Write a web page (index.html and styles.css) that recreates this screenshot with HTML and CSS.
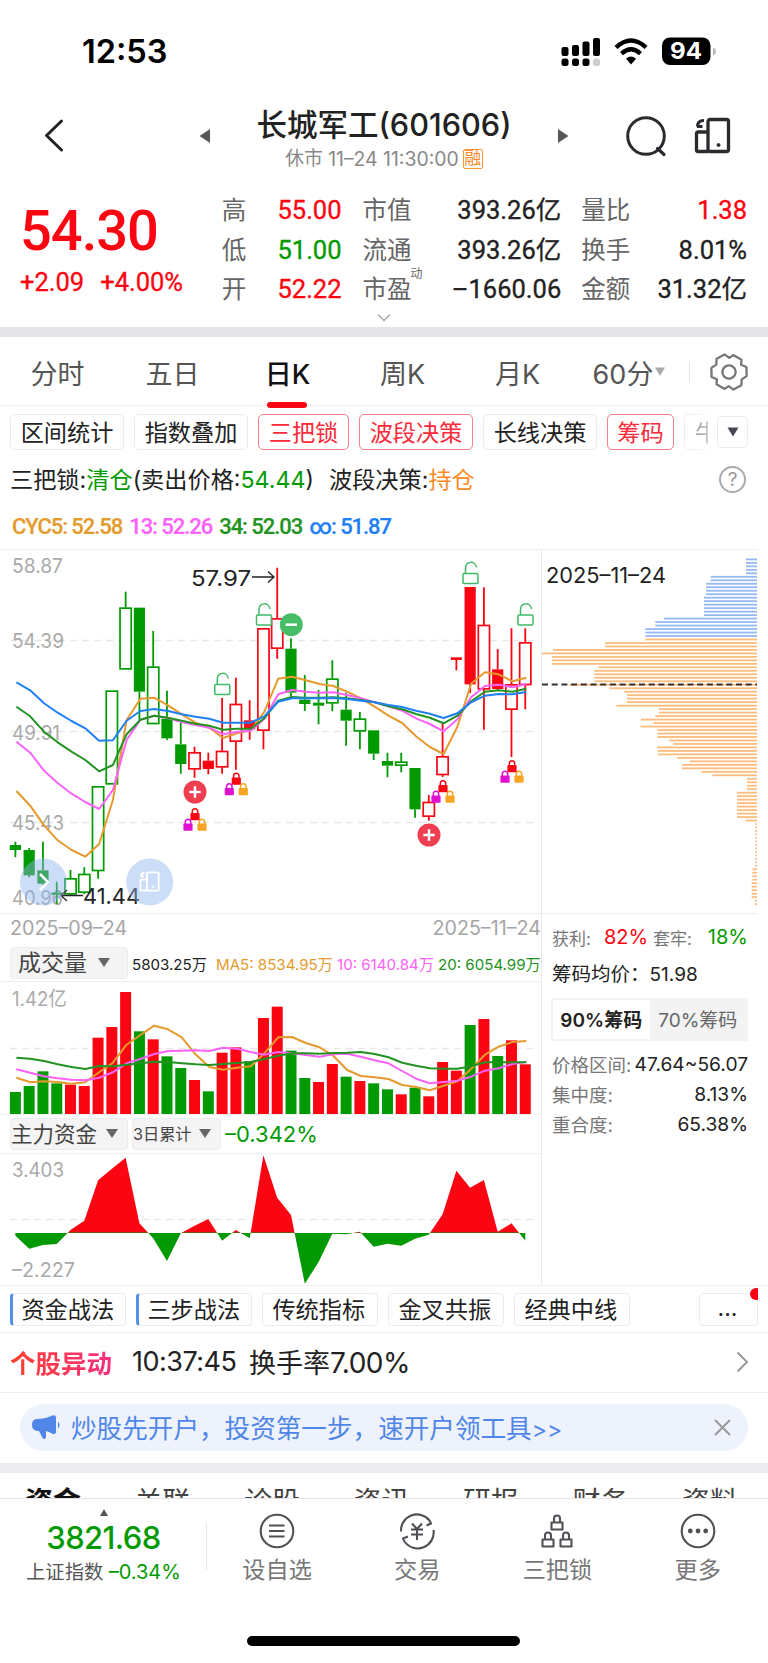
FILE: index.html
```html
<!DOCTYPE html>
<html lang="zh-CN">
<head>
<meta charset="utf-8">
<title>长城军工(601606)</title>
<link rel="stylesheet" href="styles.css">
</head>
<body>
<div class="app">
  <div class="status">
    <div class="clock">12:53</div>
    <svg class="status-icons" width="160" height="32" viewBox="0 0 160 32">
      <g fill="#000">
        <rect x="1.500" y="11" width="7" height="9" rx="2"/><rect x="12" y="9" width="7" height="11" rx="2"/><rect x="22.500" y="5.500" width="7" height="14.500" rx="2"/><rect x="33" y="2" width="7" height="18" rx="2"/>
        <rect x="1.500" y="22.500" width="7" height="7.500" rx="2.500"/><rect x="12" y="22.500" width="7" height="7.500" rx="2.500"/><rect x="22.500" y="22.500" width="7" height="7.500" rx="2.500"/><rect x="33" y="22.500" width="7" height="7.500" rx="2.500" fill="#ccc"/>
      </g>
      <g fill="none" stroke="#000" stroke-width="4.300"><path d="M56 11.500Q71 -2.500 86 11.500"/><path d="M61.500 17.700Q71 9 80.500 17.700"/></g>
      <path d="M66 22.700Q71 18.500 76 22.700L71 28.500Z"/>
      <rect x="102" y="1.500" width="48.500" height="27.500" rx="8"/>
      <path d="M153 11.500Q156 12.500 156 15.500T153 19.500Z" fill="#bbb"/>
      <text x="110" y="23" textLength="32" lengthAdjust="spacingAndGlyphs" class="batt">94</text>
    </svg>
  </div>
  <header class="head">
    <svg class="back" width="24" height="36" viewBox="0 0 24 36"><path d="M19.500 3L4.500 17.500L19.500 32" fill="none" stroke="#222" stroke-width="3" stroke-linecap="round" stroke-linejoin="round"/></svg>
    <svg class="prev" width="12" height="14" viewBox="0 0 12 14"><path d="M11 0V14L.5 7Z" fill="#555"/></svg>
    <div class="titles">
      <h1>长城军工<span class="code">(601606)</span></h1>
      <p>休市 <span class="time">11–24 11:30:00</span><i class="rong">融</i></p>
    </div>
    <svg class="next" width="12" height="14" viewBox="0 0 12 14"><path d="M1 0V14L11.500 7Z" fill="#555"/></svg>
    <svg class="search" width="42" height="44" viewBox="0 0 42 44"><circle cx="21" cy="21" r="18.300" fill="none" stroke="#2b2b2f" stroke-width="3"/><path d="M32.500 33.500L39 39.500" stroke="#2b2b2f" stroke-width="3.200" stroke-linecap="round"/></svg>
    <svg class="rotate" width="38" height="38" viewBox="0 0 38 38"><use href="#rot"/></svg>
  </header>
  <section class="quote">
    <div class="last"><div class="price">54.30</div><div class="chg"><span>+2.09</span><span>+4.00%</span></div></div>
    <dl class="stats c1"><dt>高</dt><dd class="up">55.00</dd><dt>低</dt><dd class="dn">51.00</dd><dt>开</dt><dd class="up">52.22</dd></dl>
    <dl class="stats c2"><dt>市值</dt><dd>393.26亿</dd><dt>流通</dt><dd>393.26亿</dd><dt>市盈<sup>动</sup></dt><dd>–1660.06</dd></dl>
    <dl class="stats c3"><dt>量比</dt><dd class="up">1.38</dd><dt>换手</dt><dd>8.01%</dd><dt>金额</dt><dd>31.32亿</dd></dl>
  </section>
  <div class="more"><svg width="14" height="9" viewBox="0 0 14 9"><path d="M1 1.500L7 7.500L13 1.500" fill="none" stroke="#aaa" stroke-width="1.400"/></svg></div>
  <div class="band"></div>
  <nav class="periods">
    <span>分时</span><span>五日</span><span class="on">日K</span><span>周K</span><span>月K</span>
    <span class="min">60分<svg width="12" height="10" viewBox="0 0 12 10"><path d="M1 .5H11L6 9Z" fill="#aaa"/></svg></span>
    <i class="rule"></i>
    <svg class="gear" width="38" height="38" viewBox="-19 -19 38 38"><g transform="rotate(30) scale(1.05)" fill="none" stroke="#777" stroke-width="2.200" stroke-linejoin="round"><path d="M-4.500 -16H4.500L6.500 -11.800L12 -12.400L16.500 -5L14 0L16.500 5L12 12.400L6.500 11.800L4.500 16H-4.500L-6.500 11.800L-12 12.400L-16.500 5L-14 0L-16.500 -5L-12 -12.400L-6.500 -11.800Z"/><circle r="6.300"/></g></svg>
  </nav>
  <div class="tools">
    <span class="w4">区间统计</span><span class="w4">指数叠加</span><span class="w3 sel">三把锁</span><span class="w4 sel">波段决策</span><span class="w4">长线决策</span><span class="w2 sel">筹码</span><span class="cut">牛</span><span class="drop"><svg width="12" height="10" viewBox="0 0 12 10"><path d="M.5 .5H11.500L6 9.500Z" fill="#445"/></svg></span>
  </div>
  <div class="signal"><span class="s1">三把锁:<b class="dn">清仓</b>(卖出价格:<b class="dn num">54.44</b>)</span><span>波段决策:<b class="or">持仓</b></span><i class="help">?</i></div>
  <div class="cyc"><span class="mo">CYC5: 52.58</span><span class="mp">13: 52.26</span><span class="mg">34: 52.03</span><span class="mb">∞: 51.87</span></div>

  <main class="board">
    <div class="left">
      <svg id="kline" class="kline" width="541" height="363" viewBox="0 550 541 363"></svg>
      <div class="dates"><span>2025–09–24</span><span>2025–11–24</span></div>
      <div class="volbar"><span class="select big">成交量<i class="tri"></i></span><span class="v0">5803.25万</span><span class="v1">MA5: 8534.95万</span><span class="v2">10: 6140.84万</span><span class="v3">20: 6054.99万</span></div>
      <svg id="vol" class="vol" width="541" height="132" viewBox="0 982 541 132"></svg>
      <div class="fundbar"><span class="select fund">主力资金<i class="tri"></i></span><span class="select small">3日累计<i class="tri"></i></span><span class="fv">–0.342%</span></div>
      <svg id="fund" class="fundchart" width="541" height="131" viewBox="0 1154 541 131"></svg>
    </div>
    <div class="right">
      <svg id="chips" class="chips" width="216" height="363" viewBox="542 550 216 363"></svg>
      <div class="info">
        <div class="pl"><span class="k">获利:</span><span class="up">82%</span><span class="k">套牢:</span><span class="dn">18%</span></div>
        <div class="avg">筹码均价：<span>51.98</span></div>
        <div class="seg"><span class="on">90%筹码</span><span>70%筹码</span></div>
        <div class="kv"><span>价格区间:</span><b>47.64~56.07</b></div>
        <div class="kv"><span>集中度:</span><b>8.13%</b></div>
        <div class="kv"><span>重合度:</span><b>65.38%</b></div>
      </div>
    </div>
  </main>

  <div class="tactics"><span class="blue">资金战法</span><span class="blue">三步战法</span><span>传统指标</span><span>金叉共振</span><span>经典中线</span><span class="dots">...</span></div>
  <div class="alert"><strong>个股异动</strong><span class="at">10:37:45</span><span class="am">换手率<i>7.00%</i></span><svg width="13" height="22" viewBox="0 0 13 22"><path d="M1.500 1.500L11 11L1.500 20.500" fill="none" stroke="#999" stroke-width="2"/></svg></div>
  <div class="ad-wrap"><div class="ad">
    <svg width="29" height="25" viewBox="0 0 29 25"><path d="M5 4C10 4 15 3 19.500 .8Q24 -.8 24 3V17Q24 20 20 18.500Q17 16.500 14 16V21Q14 24 12.500 24Q11 24.500 10 22L7 16Q0 16 0 10Q0 4 5 4Z" fill="#4f86e8"/><path d="M26 6.500Q29 10 26 13.500Z" fill="#4f86e8"/></svg>
    <span>炒股先开户，投资第一步，速开户领工具<i>&gt;&gt;</i></span>
    <svg class="close" width="17" height="17" viewBox="0 0 17 17"><path d="M1 1L16 16M16 1L1 16" stroke="#999" stroke-width="2"/></svg>
  </div></div>
  <div class="band light"></div>
  <nav class="subtabs"><span class="on">资金</span><span>关联</span><span>诊股</span><span>资讯</span><span>研报</span><span>财务</span><span>资料</span></nav>
  <footer class="bottom">
    <div class="index"><svg width="8" height="7" viewBox="0 0 8 7"><path d="M4 0L8 7H0Z" fill="#555"/></svg><div class="iv">3821.68</div><div class="in">上证指数 <span>–0.34%</span></div></div>
    <div class="act"><svg width="38" height="38" viewBox="-19 -19 38 38"><circle r="16.300" /><path d="M-8 -5.500H7.500M-8 0H7.500M-8 5.500H7.500"/></svg><span>设自选</span></div>
    <div class="act"><svg width="38" height="38" viewBox="-19 -19 38 38"><path d="M-16 .5A16 16 0 0 1 12.500 -10.500L14 -7.500L9.500 -5.500M16.500 -1A16 16 0 0 1 -12.500 10.500L-14 7.500L-9 5.500"/><path d="M-5 -7.500L0 -2L5 -7.500M0 -2V9M-6 -1.500H6M-6 3.500H6"/></svg><span>交易</span></div>
    <div class="act"><svg width="38" height="38" viewBox="-19 -19 38 38"><path d="M-5.500 -8.500H5.500V-1.500H-5.500ZM-3 -8.500V-12.500Q-3 -15.500 0 -15.500T3 -12.500V-8.500M-14.500 8.500H-3.500V15.500H-14.500ZM-12 8.500V4.500Q-12 1.500 -9 1.500T-6 4.500V8.500M3.500 8.500H14.500V15.500H3.500ZM6 8.500V4.500Q6 1.500 9 1.500T12 4.500V8.500"/></svg><span>三把锁</span></div>
    <div class="act"><svg width="38" height="38" viewBox="-19 -19 38 38"><circle r="16.300"/><g class="dot"><circle cx="-7.700" r="2.400"/><circle r="2.400"/><circle cx="7.700" r="2.400"/></g></svg><span>更多</span></div>
    <div class="home"></div>
  </footer>
</div>
<svg class="defs" width="0" height="0"><defs>
  <g id="rot" fill="none" stroke="currentColor" stroke-width="3.300" stroke-linejoin="round"><rect x="14" y="2.500" width="20.500" height="32" rx="2"/><path d="M14 15H4Q2.500 15 2.500 16.500V33Q2.500 34.500 4 34.500H14"/><path d="M3.500 9.500Q3.500 3.500 10 3.500M3 9.500H8.500" stroke-width="3.200"/><circle cx="24.500" cy="28" r="1.500" fill="currentColor" stroke-width="1"/></g>
</defs></svg>
<script src="charts.js"></script>
</body>
</html>
```
FILE: styles.css
```css
* { box-sizing: border-box; margin: 0; padding: 0; }
body { width: 768px; background: #fff; color: #222; font-family: Inter, "Noto Sans CJK SC", sans-serif; }
i, b { font-style: normal; font-weight: inherit; }
svg { display: block; flex: none; }
.app { width: 768px; height: 1663px; overflow: hidden; display: flex; flex-direction: column; }
.app > * { flex: none; }
.defs { position: absolute; }
.up { color: #fb0512; }
.dn { color: #029a02; }
.or { color: #ff8a1f; }

.status { height: 98px; padding: 36px 0 0 82px; display: flex; }
.clock { width: 478px; font-size: 32.500px; line-height: 32px; font-weight: 600; color: #000; }
.batt { font: 700 23px Inter, sans-serif; fill: #fff; }

.head { height: 88px; display: flex; align-items: flex-start; }
.back { margin: 20px 0 0 42px; }
.prev { margin: 31px 0 0 133px; }
.titles { width: 346px; text-align: center; }
.titles h1 { font-size: 30.500px; font-weight: 500; line-height: 40px; padding-top: 7px; white-space: nowrap; }
.code { font-size: 30.700px; }
.titles p { margin-top: 3px; font-size: 18.800px; line-height: 22px; color: #888; display: flex; justify-content: center; align-items: center; white-space: pre; }
.time { font-size: 19.400px; }
.rong { width: 20px; height: 20px; margin-left: 4px; border: 1.500px solid #f9973c; border-radius: 2px; color: #f98a26; font-size: 17px; line-height: 16px; display: flex; justify-content: center; }
.next { margin: 31px 0 0 0; }
.search { margin: 17px 0 0 56px; }
.rotate { margin: 19px 0 0 27px; color: #2b2b2f; }

.quote { height: 122px; padding: 5px 21px 0 20px; display: flex; font-family: Roboto, "Noto Sans CJK SC", sans-serif; font-weight: 500; }
.last { width: 203px; color: #fb0512; }
.price { font-size: 56px; line-height: 56px; margin: 12px 0 0 0; letter-spacing: -1px; }
.chg { display: flex; gap: 16px; font-size: 25.500px; line-height: 30px; margin-top: 8px; font-weight: 400; -webkit-text-stroke: .3px; }
.stats { display: grid; grid-template-columns: auto 1fr; grid-auto-rows: 39.500px; line-height: 39.500px; }
.stats dt { font-size: 24.500px; color: #666; font-weight: 400; white-space: nowrap; position: relative; left: -1px; }
.stats dd { font-size: 25.500px; text-align: right; font-weight: 400; -webkit-text-stroke: .35px; white-space: nowrap; }
.stats sup { position: absolute; left: 48px; top: -6px; font-size: 12px; line-height: 20px; }
.c1 { width: 119px; }
.c2 { width: 198px; margin-left: 22px; }
.c3 { width: 165px; margin-left: 21px; }
.more { height: 19px; padding-top: 5px; display: flex; justify-content: center; }
.band { height: 10px; background: #e5e5e8; }
.band.light { background: #ececef; }

.periods { height: 69px; border-bottom: 1px solid #eee; display: flex; align-items: center; padding-top: 2px; font-size: 27px; color: #555; }
.periods span { width: 115px; height: 100%; display: flex; align-items: center; justify-content: center; }
.periods span.on { color: #111; font-weight: 500; position: relative; }
.periods span.on::after { content: ""; position: absolute; left: 37px; bottom: -3px; width: 40px; height: 6px; border-radius: 3px; background: #fb0512; }
.periods .min { width: 109px; gap: 1px; }
.periods .rule { width: 1px; height: 20px; margin-left: 5px; background: #e5e5e5; }
.periods .gear { margin-left: 20px; }

.tools { height: 44px; padding: 8px 0 0 10px; display: flex; gap: 10px; font-size: 23.200px; }
.tools span { height: 36px; border: 1px solid #ececec; border-radius: 5px; display: flex; align-items: center; justify-content: center; white-space: nowrap; padding-bottom: 3px; }
.w4 { width: 114px; }
.w3 { width: 91px; }
.w2 { width: 67px; }
.tools .sel { color: #fa2b3a; border-color: #fa7f88; }
.tools .cut { width: 24px; overflow: hidden; justify-content: flex-start; padding-left: 10px; border-right: 0; border-radius: 5px 0 0 5px; color: #777; mask-image: linear-gradient(90deg, #000, #0006); }
.tools .drop { width: 31px; height: 32px; margin: 2px 0 0 -1px; padding: 0; }

.signal { height: 55px; padding: 0 22px 0 10px; display: flex; align-items: center; font-size: 23.200px; color: #222; }
.s1 { width: 319px; white-space: nowrap; }
.help { margin: 3px 0 0 auto; width: 27px; height: 27px; border: 2px solid #aaa; border-radius: 50%; color: #999; font-size: 19px; line-height: 23px; text-align: center; }
.cyc { height: 44px; padding: 0 0 2px 12px; display: flex; gap: 7px; align-items: center; font: 500 22px Roboto, sans-serif; letter-spacing: -1.05px; white-space: nowrap; -webkit-text-stroke: .2px; }
.mo { color: #e59a2e; }
.mp { color: #fb62f8; }
.mg { color: #229322; }
.mb { color: #1f80f5; }

.board { height: 736px; width: 758px; display: flex; border-top: 1px solid #eee; }
.left { width: 542px; border-right: 1px solid #e9e9ee; }
.right { width: 216px; }
.dates { height: 31px; border-top: 1px solid #eee; padding-left: 10px; display: flex; justify-content: space-between; font-size: 19.700px; line-height: 29px; color: #a5a5a5; }
.volbar { height: 38px; padding-left: 10px; display: flex; align-items: center; font-size: 15.100px; white-space: nowrap; border-bottom: 1px solid #eee; }
.select { height: 32px; border: 1px solid #ececec; border-radius: 4px; background: #f4f4f4; color: #444; display: flex; align-items: center; justify-content: space-between; padding: 0 17px 3px 0; }
.tri { width: 0; height: 0; margin-top: 2px; border: 6px solid transparent; border-top: 9px solid #666; border-bottom: 0; }
.big { width: 118px; padding-left: 7px; font-size: 23px; }
.v0 { width: 84px; margin-left: 4px; }
.v1 { width: 121px; color: #e59a2e; }
.v2 { width: 101px; color: #fb62f8; }
.v3 { color: #229322; }
.fundbar { height: 40px; padding-left: 10px; display: flex; align-items: center; border-bottom: 1px solid #eee; border-top: 1px solid #eee; }
.fund { width: 118px; font-size: 21.500px; padding-right: 9px; }
.small { width: 89px; margin-left: 4px; font-size: 16.200px; padding-right: 9px; }
.fv { margin-left: 4px; font-size: 22px; color: #029a02; }
.axis { font: 20px Inter, "Noto Sans CJK SC", sans-serif; fill: #aaa; }
.note { font: 22px Inter, sans-serif; fill: #222; }
.ln { fill: none; stroke-width: 2; stroke-linejoin: round; }

.info { border-top: 1px solid #eee; padding: 8px 10px 0 10px; font-size: 18.500px; }
.pl { display: flex; height: 30px; align-items: center; font-size: 20px; white-space: nowrap; }
.k { color: #777; font-size: 17px; width: 52px; }
.pl .up { width: 49px; }
.pl .dn { margin-left: auto; }
.avg { height: 46px; line-height: 44px; font-size: 19.500px; white-space: nowrap; }
.avg span { font-size: 19px; }
.seg { height: 43px; border: 2px solid #f3f3f3; background: #f3f3f3; display: flex; font-size: 19px; margin: 0 0 8px -1px; white-space: nowrap; width: 197px; }
.seg span { flex: 1; display: flex; align-items: center; justify-content: center; color: #666; padding-bottom: 2px; }
.seg .on { background: #fff; color: #222; font-weight: 600; }
.kv { height: 30px; display: flex; justify-content: space-between; align-items: center; white-space: nowrap; }
.kv span { color: #777; }
.kv b { color: #222; font-size: 19.200px; }

.tactics { height: 48px; width: 768px; padding: 7px 10px 0; border-top: 1px solid #eee; border-bottom: 1px solid #eee; display: flex; gap: 10.500px; font-size: 23.200px; }
.tactics span { width: 115.500px; height: 33px; border: 1px solid #ececec; border-radius: 4px; display: flex; align-items: center; justify-content: center; padding: 0 2px 3px 0; }
.tactics .blue { border-left: 3.500px solid #5590e8; }
.tactics .dots { width: 59px; margin-left: auto; position: relative; overflow: visible; clip-path: inset(-8px 0 0 0); }
.dots::after { content: ""; position: absolute; right: -5px; top: -6px; width: 12px; height: 12px; border-radius: 50%; background: #fb0512; }
.alert { height: 60px; padding: 0 19px 2px 10px; border-bottom: 1px solid #eee; display: flex; align-items: center; font-size: 27px; }
.alert strong { width: 122px; font-size: 25.500px; font-weight: 700; background: linear-gradient(90deg, #ff4030, #f62f80 102px); background-clip: text; color: transparent; }
.at { width: 117px; font-size: 27px; letter-spacing: -.5px; }
.am i { font-size: 28px; letter-spacing: -.5px; }
.alert svg { margin-left: auto; }
.ad-wrap { height: 70px; padding: 11px 20px 0; }
.ad { height: 47px; border-radius: 24px; background: #edf2fc; color: #4f86e8; padding: 0 17px 0 12px; display: flex; align-items: center; gap: 10px; font-size: 25.600px; white-space: nowrap; }
.ad span { padding-bottom: 3px; }
.ad i { font-size: 23px; }
.close { margin-left: auto; }
.subtabs { height: 26px; overflow: hidden; padding: 9px 0 0 25px; display: flex; border-bottom: 1px solid #e5e5e5; font-size: 28px; line-height: 40px; color: #444; }
.subtabs span { width: 109.500px; flex: none; }
.subtabs .on { color: #111; font-weight: 700; }
.bottom { height: 164px; display: grid; grid-template-columns: 207px repeat(4, 140.200px); grid-template-rows: 137px 10px; }
.index { text-align: center; padding-top: 10px; background: linear-gradient(#e8e8e8, #e8e8e8) right 24px / 1px 47px no-repeat; background-position: right 24px; }
.index svg { margin: 0 auto; }
.iv { font-size: 31px; font-weight: 500; line-height: 36px; margin-top: 4px; color: #029a02; letter-spacing: -.6px; }
.in { font-size: 19.300px; line-height: 28px; margin-top: 2px; color: #555; white-space: pre; }
.in span { color: #029a02; font-size: 20px; }
.act { display: flex; flex-direction: column; align-items: center; padding-top: 13px; font-size: 23.200px; line-height: 34px; color: #777; }
.act svg { margin-bottom: 3px; fill: none; stroke: #505057; stroke-width: 2.100; stroke-linejoin: round; }
.act svg .dot { fill: #505057; stroke: none; }
.home { grid-column: 1 / -1; width: 273px; height: 10px; border-radius: 5px; background: #000; justify-self: center; }
```
FILE: charts.js
```js
const X = i => 15.4 + 13.78 * i;
const RED = '#fb0512', GREEN = '#029a02';
const COLORS = { o: '#e59a2e', p: '#fb62f8', g: '#229322', b: '#1f80f5' };
const put = (id, html) => { document.getElementById(id).innerHTML = html; };
const line = (ys, color, base) =>
  `<polyline class="ln" stroke="${color}" points="${ys.map((y, i) => (X(i) + 1).toFixed(1) + ',' + (base + y / 3).toFixed(1)).join(' ')}"/>`;
const grid = (y, x1 = 10, x2 = 538) => `<path d="M${x1} ${y}H${x2}" stroke="#e8e8e8" stroke-width="1.5" stroke-dasharray="7 5"/>`;
const text = (x, y, w, s, cls = 'axis') => `<text class="${cls}" x="${x}" y="${y}" textLength="${w}" lengthAdjust="spacingAndGlyphs">${s}</text>`;

/* colour, filled, high, body top, body bottom, low */
const candles = [
  'g1 890 900 915 937', 'g1 909 915 991 997', 'g1 890 976 1016 1020', 'g1 1010 1043 1047 1076', 'g0 975 1000 1048 1050',
  'g0 967 987 1043 1048', 'g0 724 724 978 1001', 'g0 437 437 718 718', 'g0 140 188 373 373', 'g1 188 188 440 525',
  'g0 258 365 537 537', 'g1 437 521 580 585', 'g1 533 598 657 686', 'r0 605 622 673 698', 'r1 623 647 672 688',
  'r0 459 618 667 686', 'r0 398 477 590 674', 'r1 466 526 553 584', 'r0 250 250 557 613', 'r0 68 220 311 341',
  'g1 280 311 443 455', 'g1 390 464 477 498', 'g1 434 473 482 538', 'g0 346 401 475 499', 'g1 443 494 527 602',
  'g0 501 521 559 613', 'g1 556 556 626 645', 'g1 623 648 662 697', 'g0 623 650 662 682', 'g1 669 669 793 818',
  'r0 750 771 815 827', 'r0 533 634 690 696', 'r1 337 337 345 376', 'r1 126 126 418 444', 'r0 127 240 433 554',
  'r1 312 373 432 436', 'r0 250 418 494 636', 'r0 250 292 420 493'
];
const Y = v => 545 + v / 3;
let k = grid(640.5) + grid(731.5) + grid(822.5);
k += text(12, 572.5, 51, '58.87') + text(12, 648, 52, '54.39') + text(12, 739.5, 48, '49.91') + text(12, 830, 52, '45.43') + text(12, 905, 51, '40.96');
candles.forEach((c, i) => {
  const [t, h, a, b, l] = c.split(' ');
  const color = t[0] === 'g' ? GREEN : RED, x = X(i);
  const [yh, ya, yb, yl] = [h, a, b, l].map(Number).map(Y);
  k += `<path d="M${x} ${yh}V${ya}M${x} ${yb}V${yl}" stroke="${color}" stroke-width="1.8"/>`;
  k += t[1] === '1'
    ? `<rect x="${x - 5.6}" y="${ya}" width="11.2" height="${Math.max(2, yb - ya)}" fill="${color}"/>`
    : `<rect x="${x - 5.6}" y="${ya + .5}" width="11.2" height="${yb - ya - 1}" fill="#fff" stroke="${color}" stroke-width="1.7"/>`;
});
k += line([738,782,841,886,915,935,897,765,525,461,458,481,508,533,548,579,565,556,500,401,395,406,417,423,440,460,485,512,534,574,606,627,545,416,382,388,409,398], COLORS.o, 545);
k += line([590,623,677,714,746,771,792,735,585,524,512,519,531,540,548,568,560,557,521,448,435,440,443,442,450,460,472,484,497,520,537,559,523,457,423,419,427,417], COLORS.p, 545);
k += line([485,514,560,592,620,645,679,660,568,524,512,518,527,536,542,554,551,551,520,467,456,458,458,457,460,465,472,484,493,507,518,535,512,469,440,436,440,431], COLORS.g, 545);
k += line([412,436,475,503,528,550,587,586,527,498,492,498,508,515,521,533,533,533,514,470,460,460,460,459,462,467,472,480,486,497,506,519,505,472,452,447,448,441], COLORS.b, 545);
const openLock = (x, y) => `<g fill="none" stroke="#3fba68" stroke-width="1.5"><rect x="${x - 7.5}" y="${y}" width="15" height="10" rx="1"/><path d="M${x - 5} ${y}V${y - 5}C${x - 5} ${y - 13} ${x + 5} ${y - 13} ${x + 6} ${y - 6}"/></g>`;
[[222.3, 684.5], [264, 615], [470.5, 573.5], [525.5, 615]].forEach(p => { k += openLock(...p); });
const lock = (x, y, c) => `<path d="M${x - 2.7} ${y + 6}V${y + 3.5}Q${x - 2.7} ${y + .7} ${x} ${y + .7}T${x + 2.7} ${y + 3.5}V${y + 6}" fill="none" stroke="${c}" stroke-width="1.5"/><rect x="${x - 4.6}" y="${y + 5}" width="9.2" height="7.3" rx="1" fill="${c}"/>`;
[[195, 808], [236.3, 772.5], [443, 780], [512, 760]].forEach(([x, y]) => {
  k += lock(x - 7, y + 10.5, '#e010d0') + lock(x + 7, y + 10.5, '#f6a523') + lock(x, y, '#fb0512');
});
const badge = (x, y, c, plus) => `<circle cx="${x}" cy="${y}" r="11.5" fill="${c}"/><path d="M${x - 5.7} ${y}H${x + 5.7}${plus ? `M${x} ${y - 5.7}V${y + 5.7}` : ''}" stroke="#fff" stroke-width="2.5"/>`;
k += badge(195, 792, '#ef3e50', 1) + badge(429, 835, '#ef3e50', 1) + badge(291.3, 624.7, '#48bd68', 0);
k += text(191, 585.5, 60, '57.97', 'note') + '<path d="M252 577H274M268 571.5L274 577L268 582.5" fill="none" stroke="#222" stroke-width="1.3"/>';
k += text(83, 903.5, 57, '41.44', 'note') + '<path d="M83 895.500H61M67 890L61 895.500L67 901" fill="none" stroke="#222" stroke-width="1.3"/>';
k += '<circle cx="43.500" cy="882" r="23.500" fill="#8fb4ee" fill-opacity=".45"/><path d="M40 874L48 882L40 890" fill="none" stroke="#fff" stroke-width="2.5"/>';
k += '<circle cx="149.700" cy="882" r="23.500" fill="#8fb4ee" fill-opacity=".45"/><g transform="translate(139 871) scale(.57)" color="#fff"><use href="#rot"/></g>';
put('kline', k);

const vols = 'g546 g528 g484 g520 r524 r528 r383 r351 r246 g364 r388 g439 g474 r510 g544 r428 r412 g454 r324 r290 g422 g504 r516 r462 g500 r513 g520 g538 r553 g533 r559 r456 r482 g345 r327 g438 r391 r463'.split(' ');
let v = grid(1048.5) + text(12, 1006, 55, '1.42亿');
vols.forEach((s, i) => {
  const y = 910 + s.slice(1) / 3;
  v += `<rect x="${X(i) - 5.5}" y="${y}" width="11" height="${1114 - y}" fill="${s[0] === 'g' ? GREEN : RED}"/>`;
});
v += line([503,517,514,516,521,517,487,458,404,375,347,358,382,433,471,479,473,469,430,382,381,399,412,437,480,498,502,507,525,531,541,527,514,477,434,410,396,393], COLORS.o, 910);
v += line([478,488,499,505,509,511,503,487,460,447,432,423,422,421,423,413,416,426,434,426,430,435,440,433,431,440,451,460,483,506,520,516,512,500,482,475,462,456], COLORS.p, 910);
v += line([443,446,453,463,471,477,468,469,464,460,455,456,460,463,465,462,459,456,447,437,430,430,431,429,428,426,432,442,458,467,475,476,476,469,457,457,457,457], COLORS.g, 910);
put('vol', v);

const flow = [362,401,390,387,345,317,196,161,128,325,370,438,355,332,312,377,345,370,121,248,300,506,441,356,358,350,395,386,392,371,359,298,167,218,195,350,325,377];
const zero = 1233;
const area = `M${X(0)} ${zero}L${flow.map((y, i) => X(i).toFixed(1) + ' ' + (1115 + y / 3).toFixed(1)).join('L')}L${X(37)} ${zero}Z`;
put('fund', grid(1219.5) + text(12, 1177, 52, '3.403') + text(12, 1277, 63, '–2.227') +
  `<clipPath id="hi"><rect x="0" y="1150" width="541" height="${zero - 1150 + .5}"/></clipPath><clipPath id="lo"><rect x="0" y="${zero - .5}" width="541" height="60"/></clipPath>` +
  `<path d="${area}" fill="${RED}" clip-path="url(#hi)"/><path d="${area}" fill="${GREEN}" clip-path="url(#lo)"/>`);

/* run length, left edge offset */
const runs = [[5,633],[2,527],[4,513],[6,507],[1,387],[2,361],[4,331],[2,210],[1,54],[1,21],[3,51],[1,190],[4,178],[1,103],[1,223],[1,268],[3,276],[1,244],[2,372],[1,361],[1,318],[1,355],[1,316],[3,367],[1,403],[1,415],[1,366],[2,369],[1,426],[1,465],[2,441],[1,499],[1,532],[4,636],[8,606],[1,632],[13,661],[4,652],[5,650],[2,660]];
let c = '', n = 0;
runs.forEach(([count, left]) => {
  for (let j = 0; j < count; j++, n++) {
    const x = 535 + left / 3;
    c += `<rect x="${x}" y="${558.5 + n * 3.482}" width="${757 - x}" height="1.8" fill="${n < 23 ? '#94b9f2' : '#fdbc7c'}"/>`;
  }
});
c += '<path d="M542 684.500H757" stroke="#333" stroke-width="2" stroke-dasharray="6 3.700"/>' + text(546, 582.5, 120, '2025–11–24', 'note');
put('chips', c);
```
